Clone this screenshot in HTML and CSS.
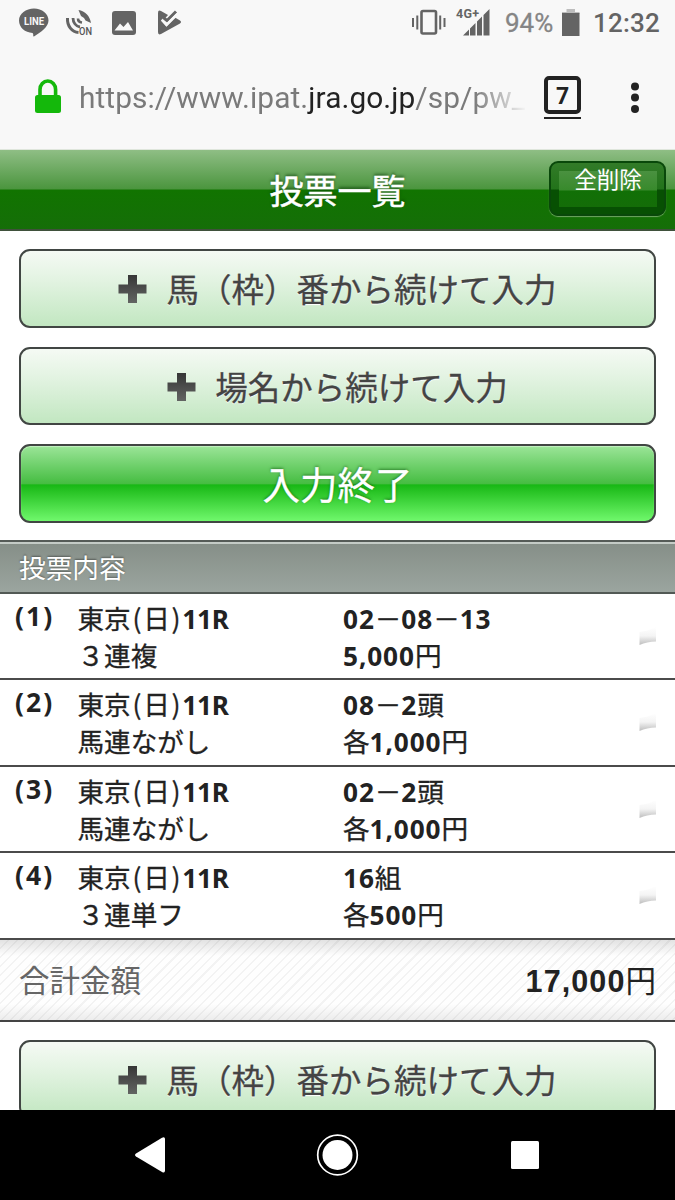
FILE: index.html
```html
<!DOCTYPE html>
<html lang="ja">
<head>
<meta charset="utf-8">
<title>投票一覧</title>
<link rel="stylesheet" href="styles.css">
</head>
<body>
<div class="phone">
  <div class="status">
    <svg class="status-left" width="190" height="44" viewBox="0 0 190 44">
      <g fill="#646464">
        <path d="M34 8.500C42 8.500 48.500 13.500 48.500 20.500C48.500 27 41 32 34 36.500C32.500 36.500 34 34 32.500 33C25 32.500 19 27.500 19 20.500C19 13.500 26 8.500 34 8.500Z"/>
        <rect x="112" y="11" width="24" height="24" rx="3"/>
        <path d="M158 13Q158 9.500 161 11L168 15L164.500 19L163 18L161 20.500L166.500 26.500L175 17.500L180 20.500Q182 22 180 23.500L161 34Q158 35.500 158 32Z"/>
      </g>
      <path fill="none" stroke="#646464" stroke-width="3" d="M163 17.500L167 20.500L176 11.500"/>
      <path fill="none" stroke="#f8f8f8" stroke-width="2.500" d="M162 20L166.500 25L177.500 14"/>
      <path fill="#f8f8f8" d="M114.500 30.500L120 23.500L123.500 27L128 22L133 30.500Z"/>
      <g fill="none" stroke="#646464">
        <path stroke-width="3" d="M67.500 18C67 26 72 32 78.500 32.500"/>
        <path stroke-width="2.800" d="M73 18C73 22.500 76 26.500 80 27"/>
        <path stroke-width="2.600" d="M78 18.500Q78 22 82 22.500"/>
      </g>
      <path fill="#646464" d="M78.500 10C85 11 90 16 91 23L85.500 20.500L84 18L81 16Z"/>
      <text class="line-label" x="34" y="24.700" text-anchor="middle" textLength="20" lengthAdjust="spacingAndGlyphs">LINE</text>
      <text class="on-label" x="79" y="34.500" textLength="13" lengthAdjust="spacingAndGlyphs">ON</text>
    </svg>
    <div class="status-right">
      <svg width="90" height="44" viewBox="410 0 90 44">
        <rect x="421.500" y="11" width="14.500" height="22.500" rx="1.500" fill="none" stroke="#646464" stroke-width="2.600"/>
        <path stroke="#646464" stroke-width="2" d="M413 18V27M417.300 15.500V29.500M440.200 15.500V29.500M444.500 18V27"/>
        <path fill="#646464" d="M463 35.500L469 29.500V35.500ZM470 28.500L475.500 23V35.500H470ZM477 21.500L482 16.500V35.500H477ZM483.500 15L489.500 9V35.500H483.500Z"/>
        <text class="net-label" x="456" y="17.500" textLength="23">4G+</text>
      </svg>
      <span class="percent">94%</span>
      <svg class="battery" width="18" height="44" viewBox="0 0 18 44"><path fill="#bdbdbd" d="M4.500 9H13V12H17.500V14H0V12H4.500Z"/><rect y="13" width="17.500" height="23" fill="#646464"/></svg>
      <span class="clock">12:32</span>
    </div>
  </div>
  <div class="urlbar">
    <svg class="lock" width="28" height="36" viewBox="0 0 28 36"><rect x="1" y="16" width="26" height="18" rx="2.500" fill="#14b80b"/><path d="M6 18V10.500a7.800 8.500 0 0 1 15.600 0V18" fill="none" stroke="#14b80b" stroke-width="3.600"/></svg>
    <div class="url">https://www.ipat.<b>jra.go.jp</b>/sp/pw_</div>
    <div class="tabs"><span>7</span></div>
    <svg class="dots" width="10" height="32" viewBox="0 0 10 32" fill="#222"><circle cx="5" cy="4.500" r="4"/><circle cx="5" cy="15.500" r="4"/><circle cx="5" cy="27" r="4"/></svg>
  </div>
  <main class="page">
    <header class="title">
      <h1>投票一覧</h1>
      <button class="clear"><span>全削除</span></button>
    </header>
    <div class="actions">
      <button class="btn"><svg class="plus" width="30" height="30" viewBox="0 0 30 30"><use href="#plus"/></svg><span>馬（枠）番から続けて入力</span></button>
      <button class="btn"><svg class="plus" width="30" height="30" viewBox="0 0 30 30"><use href="#plus"/></svg><span>場名から続けて入力</span></button>
      <button class="btn done"><span>入力終了</span></button>
    </div>
    <h2 class="section">投票内容</h2>
    <ul class="bets">
      <li><span class="no">(1)</span><p>東京<i>(</i>日<i>)</i><b class="race">11R</b><br>３連複</p><p><b>02</b>－<b>08</b>－<b>13</b><br><b>5,000</b>円</p><svg class="chev" width="18" height="22"><use href="#chev"/></svg></li>
      <li><span class="no">(2)</span><p>東京<i>(</i>日<i>)</i><b class="race">11R</b><br>馬連ながし</p><p><b>08</b>－<b>2</b>頭<br>各<b>1,000</b>円</p><svg class="chev" width="18" height="22"><use href="#chev"/></svg></li>
      <li><span class="no">(3)</span><p>東京<i>(</i>日<i>)</i><b class="race">11R</b><br>馬連ながし</p><p><b>02</b>－<b>2</b>頭<br>各<b>1,000</b>円</p><svg class="chev" width="18" height="22"><use href="#chev"/></svg></li>
      <li><span class="no">(4)</span><p>東京<i>(</i>日<i>)</i><b class="race">11R</b><br>３連単フ</p><p><b>16</b>組<br>各<b>500</b>円</p><svg class="chev" width="18" height="22"><use href="#chev"/></svg></li>
    </ul>
    <div class="total"><span>合計金額</span><strong><b>17,000</b>円</strong></div>
    <div class="actions">
      <button class="btn"><svg class="plus" width="30" height="30" viewBox="0 0 30 30"><use href="#plus"/></svg><span>馬（枠）番から続けて入力</span></button>
    </div>
  </main>
  <nav class="nav">
    <svg width="675" height="90" viewBox="0 0 675 90" fill="#fff">
      <path d="M136 43.500L162 27.700Q165 26.500 165 29V60.500Q165 63.500 162 62L136 46.500Q134 45 136 43.500Z"/>
      <circle cx="337.500" cy="45" r="15"/><circle cx="337.500" cy="45" r="19.800" fill="none" stroke="#fff" stroke-width="1.700"/>
      <rect x="511" y="31" width="28" height="28" rx="1.500"/>
    </svg>
  </nav>
</div>
<svg class="defs" width="0" height="0">
  <defs>
    <linearGradient id="pg" x1="0" y1="0" x2="0" y2="1"><stop offset="0" stop-color="#363636"/><stop offset="1" stop-color="#626462"/></linearGradient>
    <linearGradient id="cg" x1="0" y1="0" x2="0" y2="1"><stop offset="0" stop-color="#fff"/><stop offset=".5" stop-color="#f4f4f4"/><stop offset="1" stop-color="#bdbdbd"/></linearGradient>
    <path id="plus" fill="url(#pg)" d="M10 1H19V10.500H28.500V19.500H19V29H10V19.500H.500V10.500H10Z"/>
    <path id="chev" fill="url(#cg)" d="M.500 7Q10 6 17 2V16.500Q8 16.500 .500 20Z"/>
  </defs>
</svg>
</body>
</html>
```
FILE: styles.css
```css
* { box-sizing: border-box; }
body { margin: 0; font-family: "Noto Sans CJK JP", sans-serif; color: #222; }
h1, h2, p, ul { margin: 0; padding: 0; font-weight: 400; }
button { font: inherit; margin: 0; padding: 0; }
i { font-style: normal; }
.defs { position: absolute; }
.phone { width: 675px; height: 1200px; display: flex; flex-direction: column; overflow: hidden; background: #f8f8f8; }

.status { height: 48px; flex: none; display: flex; justify-content: space-between; font: 500 26px/46px Roboto, sans-serif; color: #646464; }
.status-right { display: flex; padding-right: 15px; }
.line-label { font: 700 10.500px Roboto, sans-serif; fill: #f8f8f8; }
.on-label { font: 500 11.500px Roboto, sans-serif; fill: #555; }
.net-label { font: 700 12.500px Roboto, sans-serif; fill: #646464; }
.percent { width: 57px; margin-left: 5px; font-weight: 400; color: #858585; -webkit-text-stroke: .3px #858585; }
.battery { width: 18px; }
.clock { width: 67px; margin-left: 13px; letter-spacing: .2px; }

.urlbar { height: 102px; flex: none; display: flex; align-items: center; padding: 0 34px 2px; border-bottom: 1px solid #dfe6dc; }
.lock { margin-bottom: 1px; }
.url { width: 450px; margin-left: 17px; margin-right: -1px; font: 400 29.850px/42px Roboto, sans-serif; letter-spacing: .08px; color: #7a7a7a; white-space: nowrap; overflow: hidden; mask-image: linear-gradient(90deg, #000 395px, transparent 448px); }
.url b { font-weight: 400; color: #222; }
.tabs { width: 37px; height: 43px; margin-left: 16px; border-bottom: 2px solid #222; }
.tabs span { display: block; height: 38px; border: 4px solid #222; border-radius: 5px; font: 700 23px/33px Roboto, sans-serif; text-align: center; }
.dots { margin-left: 49px; flex: none; }

.page { height: 960px; flex: none; background: #fff; overflow: hidden; }
.title { height: 81px; display: grid; grid-template-columns: 1fr auto 1fr; align-items: center; border-bottom: 2px solid #3f513b; background: linear-gradient(#8fbe85 0, #4b953e 39px, #117400 40px, #156e08 79px); }
.title h1 { grid-column: 2; font-size: 34px; line-height: 78px; font-weight: 400; -webkit-text-stroke: .5px #fff; color: #fff; text-shadow: 0 -2px 3px rgba(0,50,0,.6); }
.clear { justify-self: end; width: 117px; height: 55px; margin: 0 9px 2px 0; padding: 8px; border: 2px solid #09480a; border-radius: 9px; color: #fff; background: linear-gradient(#327b28 0, #22731a 26px, #075003 27px, #075003 100%); box-shadow: 0 1px 1px #6fa663; }
.clear span { display: block; width: 98px; height: 36px; font-size: 22.500px; line-height: 15px; background: linear-gradient(#4a9140 0, #388a2c 19px, #117006 20px, #146d08 100%); }

.actions { display: flex; flex-direction: column; gap: 19px; padding: 18px 19px 17px; }
.btn { height: 78.500px; display: flex; align-items: center; justify-content: center; gap: 18px; border: 2px solid #414643; border-radius: 11px; background: linear-gradient(#f5faf4, #e2f3e1 40%, #c2e7c1); color: #444; font-size: 32.500px; font-weight: 400; -webkit-text-stroke: .3px #444; text-shadow: 0 1px 1px #fff; }
.btn span { line-height: 72px; }
.plus { margin-top: 2px; }
.done { font-size: 37.500px; color: #fff; -webkit-text-stroke: .3px #fff; background: linear-gradient(#9be598 0, #46bd42 50%, #18b815 52%, #70f86c 100%); text-shadow: 0 -1px 3px rgba(0,70,0,.6); box-shadow: inset 0 1px 1px #c5f1c2; }

.section { height: 54px; padding-left: 19px; border-top: 2px solid #555b57; border-bottom: 2px solid #525955; box-shadow: inset 0 2px 0 #c4cbc6; background: linear-gradient(#858e87, #9ba59f); color: #fff; font-size: 26.700px; line-height: 49px; text-shadow: 0 -1px 2px rgba(0,0,0,.4); }
.bets { list-style: none; }
.bets li { display: grid; grid-template-columns: 63.500px 265.500px 296px 18px; height: 86.500px; padding: 5px 0 0 14px; border-bottom: 2px solid #4b4b4b; font-size: 26.600px; line-height: 37px; -webkit-text-stroke: .3px #222; }
.bets b, .no { font-family: "Noto Sans", sans-serif; font-weight: 700; font-size: 26.200px; letter-spacing: .9px; -webkit-text-stroke: 0; }
.bets b { line-height: 0; }
.bets .race { letter-spacing: -.2px; }
.bets .no { padding-left: 1px; font-size: 26.500px; letter-spacing: 2px; line-height: 35px; }
.bets i { display: inline-block; width: 12.500px; line-height: 30px; text-align: center; }
.chev { margin-top: 26px; }
.total { height: 82px; display: flex; justify-content: space-between; padding: 0 19px; border-bottom: 2px solid #444; font-size: 30.500px; line-height: 78px; color: #666; background: linear-gradient(rgba(0,0,0,.11), transparent 16px, transparent 64px, rgba(0,0,0,.07)), repeating-linear-gradient(135deg, #fefefe 0 5px, #f3f3f3 5px 6.500px); }
.total strong { font-weight: 400; color: #222; }
.total b { font-family: "Liberation Sans", sans-serif; letter-spacing: 1.100px; }
.nav { height: 90px; flex: none; background: #000; }
```
